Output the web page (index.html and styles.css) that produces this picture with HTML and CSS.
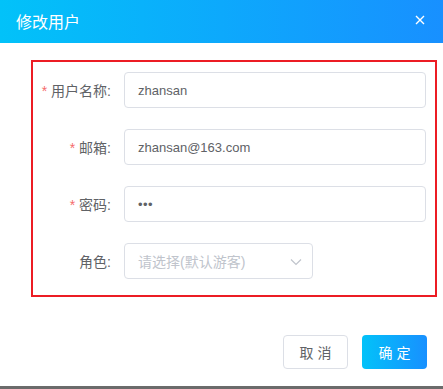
FILE: index.html
```html
<!DOCTYPE html>
<html lang="zh-CN">
<head>
  <meta charset="UTF-8">
  <meta name="viewport" content="width=device-width, initial-scale=1.0">
  <title>修改用户</title>
  <link rel="stylesheet" href="styles.css">
</head>
<body>

  <div class="dialog">
    <div class="dialog-header">
      <span class="dialog-title">修改用户</span>
      <span class="dialog-close">
        <svg width="10" height="10" viewBox="0 0 10 10">
          <path d="M1 1 L9 9 M9 1 L1 9" stroke="#fff" stroke-width="1.4" fill="none"/>
        </svg>
      </span>
    </div>

    <div class="dialog-body">
      <div class="form-box">
        <div class="form-row">
          <label class="form-label required">用户名称:</label>
          <div class="input">zhansan</div>
        </div>
        <div class="form-row">
          <label class="form-label required">邮箱:</label>
          <div class="input">zhansan@163.com</div>
        </div>
        <div class="form-row">
          <label class="form-label required">密码:</label>
          <div class="input password">•••</div>
        </div>
        <div class="form-row">
          <label class="form-label">角色:</label>
          <div class="input select">
            <span class="placeholder">请选择(默认游客)</span>
            <svg class="arrow" width="12" height="8" viewBox="0 0 12 8">
              <path d="M1 1.5 L6 6.5 L11 1.5" stroke="#c0c4cc" stroke-width="1.2" fill="none"/>
            </svg>
          </div>
        </div>
      </div>
    </div>

    <!-- Footer buttons -->
    <div class="dialog-footer">
      <button class="btn">取 消</button>
      <button class="btn btn-primary">确 定</button>
    </div>
  </div>

</body>
</html>
```

FILE: styles.css
```css
body {
  margin: 0;
  padding: 0;
  background-color: #fff;
  font-family: "Liberation Sans", "Noto Sans CJK SC", sans-serif;
  color: #606266;
}

.dialog {
  width: 443px;
  height: 389px;
  box-sizing: border-box;
  border-bottom: 3px solid #6b6b6b;
  display: flex;
  flex-direction: column;
}

.dialog-header {
  height: 43px;
  background: linear-gradient(90deg, #02c2f9, #1890ff);
  display: flex;
  align-items: center;
  justify-content: space-between;
  padding: 0 18px 0 16px;
}

.dialog-title {
  color: #fff;
  font-size: 16px;
  line-height: 1;
  padding-top: 2px;
}

.dialog-close {
  display: flex;
  margin-top: -3px;
}

.dialog-body {
  padding: 17px 6px 0 31px;
}

.form-box {
  border: 2px solid #ec1c24;
  padding: 10px 9px 16px 0;
  display: flex;
  flex-direction: column;
  gap: 21px;
}

.form-row {
  display: flex;
  align-items: center;
}

.form-label {
  width: 91px;
  box-sizing: border-box;
  padding-right: 13px;
  text-align: right;
  font-size: 14px;
  white-space: nowrap;
}

.form-label.required::before {
  content: "*";
  color: #f56c6c;
  margin-right: 4px;
}

.input {
  flex: 1;
  height: 36px;
  box-sizing: border-box;
  border: 1px solid #dcdfe6;
  border-radius: 4px;
  padding: 0 13px;
  display: flex;
  align-items: center;
  font-size: 13px;
  color: #606266;
}

.password {
  letter-spacing: 0.5px;
}

.select {
  flex: none;
  width: 189px;
  justify-content: space-between;
  padding-right: 10px;
  font-size: 14px;
}

.placeholder {
  color: #c0c4cc;
}

.arrow {
  margin-top: 2px;
}

.dialog-footer {
  display: flex;
  justify-content: flex-end;
  gap: 14px;
  padding: 38px 16px 0 0;
}

.btn {
  width: 65px;
  height: 34px;
  border: 1px solid #dcdfe6;
  border-radius: 4px;
  background-color: #fff;
  color: #606266;
  font-family: inherit;
  font-size: 14px;
  padding: 0;
  cursor: pointer;
}

.btn-primary {
  border: none;
  background: linear-gradient(90deg, #02c2f9, #1890ff);
  color: #fff;
}
```
